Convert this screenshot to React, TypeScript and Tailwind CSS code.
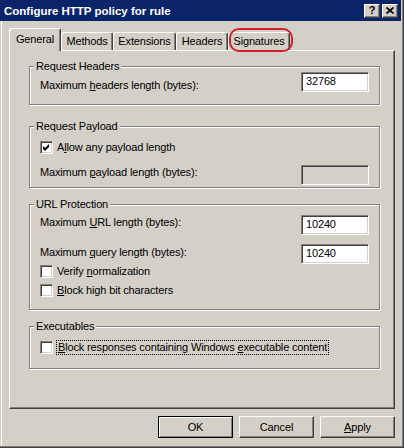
import React from "react";

const sunken =
  "border border-t-[#808080] border-l-[#808080] border-r-white border-b-white shadow-[inset_1px_1px_#404040,inset_-1px_-1px_#d4d0c8]";
const raised =
  "border border-t-white border-l-white border-r-[#404040] border-b-[#404040] shadow-[inset_-1px_-1px_#808080]";

function Check({ checked }: { checked?: boolean }) {
  return (
    <span className={`w-[13px] h-[13px] shrink-0 bg-white flex items-center justify-center ${sunken}`}>
      {checked && (
        <svg width="7" height="7" viewBox="0 0 7 7">
          <path d="M0 2 L2 4 L6 0 L6 3 L2 7 L0 5 Z" fill="#000" />
        </svg>
      )}
    </span>
  );
}

function Field({ value, disabled }: { value?: string; disabled?: boolean }) {
  return (
    <div className={`w-[68px] h-[20px] shrink-0 pl-[4px] pt-[2px] ${disabled ? "bg-[#d4d0c8]" : "bg-white"} ${sunken}`}>
      {value}
    </div>
  );
}

function Group({ title, className, children }: { title: string; className: string; children: React.ReactNode }) {
  return (
    <div className={`relative ml-[19px] w-[351px] border border-[#808080] shadow-[inset_1px_1px_#fff,1px_1px_#fff] ${className}`}>
      <span className="absolute left-[4px] top-[-7px] px-[2px] bg-[#d4d0c8]">{title}</span>
      {children}
    </div>
  );
}

function Tab({ label, w, active }: { label: string; w: string; active?: boolean }) {
  if (active) {
    return (
      <div className={`relative z-10 ${w} h-[23px] -mb-[1px] bg-[#d4d0c8] border-t border-l border-r border-t-white border-l-white border-r-[#404040] shadow-[inset_-1px_0_#808080] rounded-t-[3px] pt-[4px] flex justify-center`}>
        {label}
      </div>
    );
  }
  return (
    <div className={`${w} h-[18px] border-t border-l border-r border-t-white border-l-white border-r-[#404040] shadow-[inset_-1px_0_#808080] rounded-t-[3px] pt-[2px] flex justify-center`}>
      {label}
    </div>
  );
}

function Button({ label, primary }: { label: React.ReactNode; primary?: boolean }) {
  const frame = primary
    ? "border border-black shadow-[inset_1px_1px_#fff,inset_-1px_-1px_#808080]"
    : raised;
  return <div className={`w-[75px] h-[22px] flex items-center justify-center ${frame}`}>{label}</div>;
}

export default function App() {
  return (
    <div className="w-[404px] h-[448px] bg-[#d4d0c8] flex flex-col text-[11px] leading-[13px] tracking-[-0.15px] text-black font-['Liberation_Sans',Arial,sans-serif] shadow-[inset_-1px_-1px_#404040,inset_-2px_-2px_#808080,inset_1px_0_#d4d0c8,inset_2px_0_#fff] select-none">
      {/* title bar */}
      <div className="w-[401px] h-[21px] shrink-0 bg-[#0a246a] flex items-center justify-between pl-[4px] pr-[3px]">
        <span className="text-white font-bold text-[11.5px] tracking-normal pt-[1px]">Configure HTTP policy for rule</span>
        <div className="flex gap-[2px]">
          <div className={`w-[16px] h-[14px] bg-[#d4d0c8] flex items-center justify-center font-bold text-[11px] leading-none ${raised}`}>?</div>
          <div className={`w-[16px] h-[14px] bg-[#d4d0c8] flex items-center justify-center ${raised}`}>
            <svg width="8" height="7" viewBox="0 0 8 7">
              <path d="M0.5 0.5 L7.5 6.5 M7.5 0.5 L0.5 6.5" stroke="#000" strokeWidth="1.7" />
            </svg>
          </div>
        </div>
      </div>

      {/* tabs */}
      <div className="relative mt-[7px] h-[22px] pl-[9px] flex items-end">
        <Tab label="General" w="w-[52px]" active />
        <Tab label="Methods" w="w-[52px]" />
        <Tab label="Extensions" w="w-[63px]" />
        <Tab label="Headers" w="w-[52px]" />
        <Tab label="Signatures" w="w-[62px]" />
        <div className="absolute left-[229px] top-0 w-[64px] h-[24px] border-[2.5px] border-[#d0202a] rounded-[10px] z-20" />
      </div>

      {/* panel */}
      <div className="ml-[9px] w-[386px] h-[359px] shrink-0 flex flex-col border border-t-white border-l-white border-r-[#404040] border-b-[#404040] shadow-[inset_-1px_-1px_#808080]">
        <Group title="Request Headers" className="mt-[15px] h-[39px]">
          <div className="flex justify-between pl-[10px] pr-[10px] mt-[5px]">
            <span className="mt-[7px]">
              Maximum <u>h</u>eaders length (bytes):
            </span>
            <Field value="32768" />
          </div>
        </Group>

        <Group title="Request Payload" className="mt-[21px] h-[62px]">
          <div className="flex items-center gap-[4px] pl-[10px] mt-[14px]">
            <Check checked />
            <span>
              A<u>l</u>low any payload length
            </span>
          </div>
          <div className="flex justify-between pl-[10px] pr-[10px] mt-[11px]">
            <span className="mt-[1px]">
              Maximum <u>p</u>ayload length (bytes):
            </span>
            <Field disabled />
          </div>
        </Group>

        <Group title="URL Protection" className="mt-[16px] h-[106px]">
          <div className="flex justify-between pl-[10px] pr-[10px] mt-[10px]">
            <span className="mt-[1px]">
              Maximum <u>U</u>RL length (bytes):
            </span>
            <Field value="10240" />
          </div>
          <div className="flex justify-between pl-[10px] pr-[10px] mt-[9px]">
            <span className="mt-[2px]">
              Maximum <u>q</u>uery length (bytes):
            </span>
            <Field value="10240" />
          </div>
          <div className="flex items-center gap-[4px] pl-[10px] mt-[1px]">
            <Check />
            <span>
              Verify <u>n</u>ormalization
            </span>
          </div>
          <div className="flex items-center gap-[4px] pl-[10px] mt-[6px]">
            <Check />
            <span>
              <u>B</u>lock high bit characters
            </span>
          </div>
        </Group>

        <Group title="Executables" className="mt-[16px] h-[43px]">
          <div className="flex items-center gap-[3px] pl-[10px] mt-[13px]">
            <Check />
            <span className="border border-dotted border-black px-[1px]">
              <u>B</u>lock responses containing Windows <u>e</u>xecutable content
            </span>
          </div>
        </Group>
      </div>

      {/* buttons */}
      <div className="flex justify-end gap-[6px] pr-[9px] mt-[7px]">
        <Button label="OK" primary />
        <Button label="Cancel" />
        <Button
          label={
            <span>
              <u>A</u>pply
            </span>
          }
        />
      </div>
    </div>
  );
}
